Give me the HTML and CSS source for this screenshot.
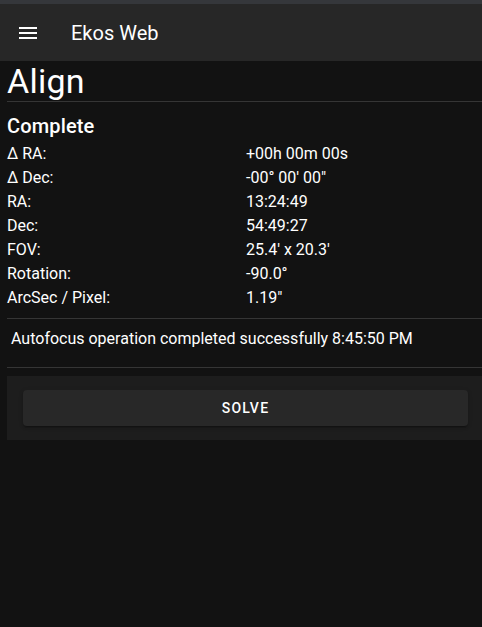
FILE: index.html
```html
<!DOCTYPE html>
<html lang="en">
<head>
<meta charset="utf-8">
<title>Ekos Web</title>
<link rel="stylesheet" href="styles.css">
</head>
<body>
<div class="topstrip"></div>
<header class="appbar">
  <svg class="menu-icon" viewBox="0 0 24 24" width="24" height="24"><path d="M3 18h18v-2H3v2zm0-5h18v-2H3v2zm0-7v2h18V6H3z" fill="#fff"/></svg>
  <span class="appbar-title">Ekos Web</span>
</header>
<main class="content">
  <h1 class="page-title">Align</h1>
  <hr class="divider">
  <h2 class="section-title">Complete</h2>
  <div class="info-grid">
    <div class="label">Δ RA:</div><div class="value">+00h 00m 00s</div>
    <div class="label">Δ Dec:</div><div class="value">-00° 00' 00"</div>
    <div class="label">RA:</div><div class="value">13:24:49</div>
    <div class="label">Dec:</div><div class="value">54:49:27</div>
    <div class="label">FOV:</div><div class="value">25.4' x 20.3'</div>
    <div class="label">Rotation:</div><div class="value">-90.0°</div>
    <div class="label">ArcSec / Pixel:</div><div class="value">1.19"</div>
  </div>
  <hr class="divider divider-gap">
  <p class="message">Autofocus operation completed successfully 8:45:50 PM</p>
  <hr class="divider">
  <section class="card">
    <button class="solve-btn">Solve</button>
  </section>
</main>
</body>
</html>
```
FILE: styles.css
```css
html, body {
  margin: 0;
  padding: 0;
  background: #121212;
  color: #ffffff;
  font-family: Roboto, "Noto Sans", sans-serif;
}

.topstrip {
  height: 4px;
  background: #35373b;
}

.appbar {
  height: 57px;
  background: #272727;
  display: flex;
  align-items: center;
  padding-left: 16px;
  box-sizing: border-box;
}

.menu-icon {
  display: block;
  flex: none;
}

.appbar-title {
  margin-left: 31px;
  font-size: 20px;
  font-weight: 400;
}

.content {
  padding-left: 7px;
}

.page-title {
  margin: 0;
  font-size: 34px;
  font-weight: 400;
  line-height: 40px;
  letter-spacing: 0.25px;
}

.divider {
  margin: 0;
  border: none;
  height: 1px;
  background: #353535;
}

.divider-gap {
  margin-top: 8px;
}

.section-title {
  margin: 8px 0 0;
  font-size: 20px;
  font-weight: 500;
  line-height: 32px;
  letter-spacing: 0.15px;
}

.info-grid {
  display: grid;
  grid-template-columns: 239px 1fr;
  font-size: 16px;
  line-height: 24px;
}

.message {
  margin: 0;
  padding: 8px 4px 16px;
  font-size: 16px;
  line-height: 24px;
}

.card {
  margin-top: 8px;
  background: #1d1d1d;
  padding: 14px 14px 14px 16px;
}

.solve-btn {
  display: block;
  width: 100%;
  height: 36px;
  border: none;
  border-radius: 4px;
  background: #282828;
  color: #ffffff;
  font-family: Roboto, "Noto Sans", sans-serif;
  font-size: 14px;
  font-weight: 500;
  letter-spacing: 1.25px;
  text-transform: uppercase;
  box-shadow: 0 3px 1px -2px rgba(0,0,0,0.2), 0 2px 2px 0 rgba(0,0,0,0.14), 0 1px 5px 0 rgba(0,0,0,0.12);
}
```
